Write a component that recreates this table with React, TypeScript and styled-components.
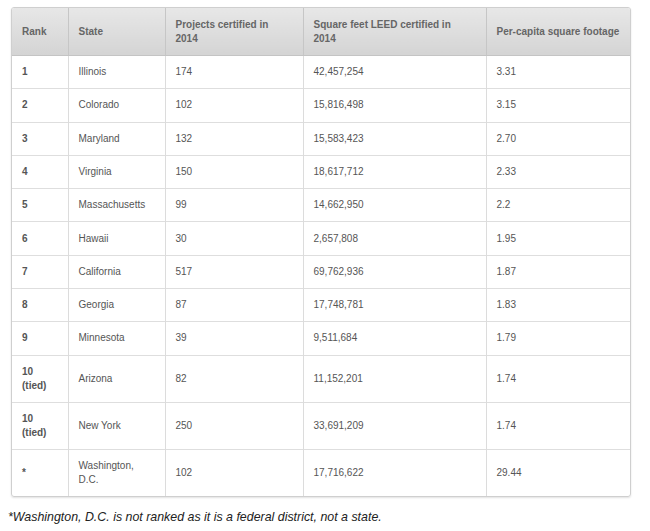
import React from "react";
import styled, { createGlobalStyle } from "styled-components";

const Global = createGlobalStyle`
  html, body { margin: 0; padding: 0; background: #ffffff; }
  body { font-family: "Liberation Sans", Arial, sans-serif; }
`;

const Page = styled.div`
  padding: 7px 19px 0 11px;
  width: 620px;
`;

const TableWrap = styled.div`
  border: 1px solid #cfcfcf;
  border-radius: 3px;
  box-shadow: 0 1px 2px rgba(0, 0, 0, 0.12);
  overflow: hidden;
`;

const Table = styled.table`
  width: 100%;
  border-collapse: collapse;
  table-layout: fixed;
  font-size: 10px;
  line-height: 14px;
  color: #555;
`;

const Th = styled.th`
  text-align: left;
  vertical-align: middle;
  font-weight: bold;
  color: #666;
  padding: 9.5px 10px;
  background: linear-gradient(#e7e7e7, #d4d4d4);
  border-left: 1px solid #c6c6c6;
  border-bottom: 1px solid #c4c4c4;
  &:first-child { border-left: none; }
`;

const Td = styled.td<{ $bold?: boolean }>`
  text-align: left;
  vertical-align: middle;
  padding: 9.15px 10px;
  border-left: 1px solid #dcdcdc;
  border-top: 1px solid #dedede;
  font-weight: ${(p) => (p.$bold ? "bold" : "normal")};
  &:first-child { border-left: none; }
`;

const Note = styled.p`
  margin: 13px 0 0 -3px;
  font-style: italic;
  font-size: 12.4px;
  color: #222;
`;

const cols = [56, 97, 138, 183, 146];

const rows: [string, string, string, string, string][] = [
  ["1", "Illinois", "174", "42,457,254", "3.31"],
  ["2", "Colorado", "102", "15,816,498", "3.15"],
  ["3", "Maryland", "132", "15,583,423", "2.70"],
  ["4", "Virginia", "150", "18,617,712", "2.33"],
  ["5", "Massachusetts", "99", "14,662,950", "2.2"],
  ["6", "Hawaii", "30", "2,657,808", "1.95"],
  ["7", "California", "517", "69,762,936", "1.87"],
  ["8", "Georgia", "87", "17,748,781", "1.83"],
  ["9", "Minnesota", "39", "9,511,684", "1.79"],
  ["10 (tied)", "Arizona", "82", "11,152,201", "1.74"],
  ["10 (tied)", "New York", "250", "33,691,209", "1.74"],
  ["*", "Washington, D.C.", "102", "17,716,622", "29.44"],
];

export default function App() {
  return (
    <>
      <Global />
      <Page>
        <TableWrap>
          <Table>
            <colgroup>
              {cols.map((w, i) => (
                <col key={i} style={{ width: w }} />
              ))}
            </colgroup>
            <thead>
              <tr>
                <Th>Rank</Th>
                <Th>State</Th>
                <Th>Projects certified in 2014</Th>
                <Th>Square feet LEED certified in 2014</Th>
                <Th>Per-capita square footage</Th>
              </tr>
            </thead>
            <tbody>
              {rows.map((r, i) => (
                <tr key={i}>
                  <Td $bold>{r[0]}</Td>
                  <Td>{r[1]}</Td>
                  <Td>{r[2]}</Td>
                  <Td>{r[3]}</Td>
                  <Td>{r[4]}</Td>
                </tr>
              ))}
            </tbody>
          </Table>
        </TableWrap>
        <Note>*Washington, D.C. is not ranked as it is a federal district, not a state.</Note>
      </Page>
    </>
  );
}
